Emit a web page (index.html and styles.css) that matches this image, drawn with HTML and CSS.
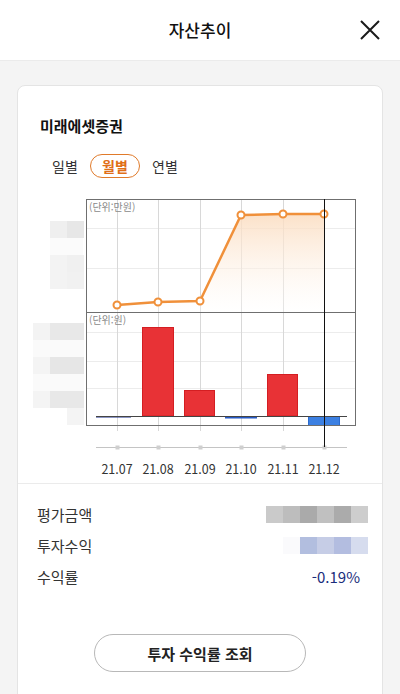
FILE: index.html
```html
<!DOCTYPE html>
<html lang="ko">
<head>
<meta charset="utf-8">
<title>자산추이</title>
<link rel="stylesheet" href="styles.css">
</head>
<body>
<header class="top">
  <h1 class="top-title">자산추이</h1>
  <button class="close" aria-label="닫기">
    <svg width="22" height="22" viewBox="0 0 22 22"><path d="M2 2 L20 20 M20 2 L2 20" stroke="#1a1a1a" stroke-width="2" fill="none"/></svg>
  </button>
</header>
<main class="page">
  <section class="card">
    <h2 class="card-title">미래에셋증권</h2>
    <div class="tabs">
      <span class="tab">일별</span>
      <span class="tab active">월별</span>
      <span class="tab">연별</span>
    </div>
    <div class="chart">
      <svg width="366" height="293" viewBox="17 190 366 293">
        <defs>
          <linearGradient id="area" x1="0" y1="0" x2="0" y2="1">
            <stop offset="0" stop-color="#fbdcbf" stop-opacity="0.85"/>
            <stop offset="1" stop-color="#ffffff" stop-opacity="0.3"/>
          </linearGradient>
        </defs>
        <!-- blurred y-axis labels -->
        <g>
          <rect x="49" y="221" width="17" height="17" fill="#efefef"/>
          <rect x="66" y="221" width="17" height="17" fill="#e7e7e7"/>
          <rect x="49" y="238" width="33" height="17" fill="#fbfbfb"/>
          <rect x="49" y="255" width="17" height="17" fill="#f3f3f3"/>
          <rect x="66" y="255" width="17" height="17" fill="#f0f0f0"/>
          <rect x="49" y="272" width="17" height="17" fill="#f3f3f3"/>
          <rect x="66" y="272" width="17" height="17" fill="#f1f1f1"/>
          <rect x="32" y="323" width="17" height="17" fill="#f3f3f3"/>
          <rect x="49" y="323" width="34" height="17" fill="#e8e8e8"/>
          <rect x="32" y="340" width="51" height="17" fill="#fafafa"/>
          <rect x="32" y="357" width="17" height="17" fill="#f4f4f4"/>
          <rect x="49" y="357" width="34" height="17" fill="#e6e6e6"/>
          <rect x="32" y="374" width="51" height="17" fill="#fafafa"/>
          <rect x="32" y="391" width="17" height="17" fill="#f4f4f4"/>
          <rect x="49" y="391" width="34" height="17" fill="#e8e8e8"/>
          <rect x="66" y="408" width="17" height="17" fill="#f4f4f4"/>
        </g>
        <!-- grid -->
        <g stroke="#ececec" stroke-width="1">
          <line x1="86" y1="228.5" x2="354" y2="228.5"/>
          <line x1="86" y1="268.5" x2="354" y2="268.5"/>
          <line x1="86" y1="332.5" x2="354" y2="332.5"/>
          <line x1="86" y1="361.5" x2="354" y2="361.5"/>
          <line x1="86" y1="388.5" x2="354" y2="388.5"/>
        </g>
        <g stroke="#d8d8d8" stroke-width="1">
          <line x1="116.5" y1="199" x2="116.5" y2="431"/>
          <line x1="157.5" y1="199" x2="157.5" y2="431"/>
          <line x1="199.5" y1="199" x2="199.5" y2="431"/>
          <line x1="240.5" y1="199" x2="240.5" y2="431"/>
          <line x1="282.5" y1="199" x2="282.5" y2="431"/>
        </g>
        <!-- area + line -->
        <polygon points="116,305 157,302 199,301 240,215 282,214 323,214 323,312 116,312" fill="url(#area)"/>
        <polyline points="116,305 157,302 199,301 240,215 282,214 323,214" fill="none" stroke="#f0903a" stroke-width="2.5" stroke-linejoin="round"/>
        <g fill="#fff" stroke="#f0903a" stroke-width="2">
          <circle cx="116" cy="305" r="3.5"/>
          <circle cx="157" cy="302" r="3.5"/>
          <circle cx="199" cy="301" r="3.5"/>
          <circle cx="240" cy="215" r="3.5"/>
          <circle cx="282" cy="214" r="3.5"/>
          <circle cx="323" cy="214" r="3.5"/>
        </g>
        <!-- bars -->
        <g fill="#e83236" stroke="#d41e22" stroke-width="1">
          <rect x="141.5" y="327.5" width="31" height="88.5"/>
          <rect x="183.5" y="390.5" width="30" height="25.5"/>
          <rect x="266.5" y="374.5" width="30" height="41.5"/>
        </g>
        <rect x="95" y="416" width="35" height="1.5" fill="#1b2f8a"/>
        <rect x="224" y="416" width="32" height="2.5" fill="#2559c4"/>
        <rect x="307.5" y="416.5" width="31" height="9" fill="#3c80e2" stroke="#2a6bd0" stroke-width="1"/>
        <line x1="95" y1="416.5" x2="346" y2="416.5" stroke="#444" stroke-width="1"/>
        <!-- frames -->
        <rect x="85.5" y="199.5" width="269" height="113" fill="none" stroke="#6f6f6f" stroke-width="1"/>
        <rect x="85.5" y="312.5" width="269" height="113" fill="none" stroke="#6f6f6f" stroke-width="1"/>
        <text x="88" y="211" class="unit">(단위:만원)</text>
        <text x="88" y="324" class="unit">(단위:원)</text>
        <!-- x axis -->
        <line x1="95" y1="447.5" x2="346" y2="447.5" stroke="#c4c4c4" stroke-width="1"/>
        <g fill="#cfcfcf">
          <rect x="114.5" y="445.5" width="4" height="4"/>
          <rect x="155.5" y="445.5" width="4" height="4"/>
          <rect x="197.5" y="445.5" width="4" height="4"/>
          <rect x="238.5" y="445.5" width="4" height="4"/>
          <rect x="280.5" y="445.5" width="4" height="4"/>
          <rect x="321.5" y="445.5" width="4" height="4"/>
        </g>
        <line x1="323.5" y1="199" x2="323.5" y2="447" stroke="#111" stroke-width="1"/>
        <g class="xlabel">
          <text x="116" y="474">21.07</text>
          <text x="157" y="474">21.08</text>
          <text x="199" y="474">21.09</text>
          <text x="240" y="474">21.10</text>
          <text x="282" y="474">21.11</text>
          <text x="323" y="474">21.12</text>
        </g>
      </svg>
    </div>
    <dl class="info">
      <div class="row">
        <dt>평가금액</dt>
        <dd class="mosaic">
          <i style="background:#cacaca"></i><i style="background:#bdbdbd"></i><i style="background:#aaaaaa"></i><i style="background:#c0c0c0"></i><i style="background:#ababab"></i><i style="background:#cdcdcd"></i>
        </dd>
      </div>
      <div class="row">
        <dt>투자수익</dt>
        <dd class="mosaic">
          <i style="background:#fafafc"></i><i style="background:#b2bedf"></i><i style="background:#c6cde6"></i><i style="background:#b3bde0"></i><i style="background:#d6dcee"></i>
        </dd>
      </div>
      <div class="row">
        <dt>수익률</dt>
        <dd class="rate">-0.19%</dd>
      </div>
    </dl>
    <div class="actions">
      <button class="btn">투자 수익률 조회</button>
    </div>
  </section>
</main>
</body>
</html>
```
FILE: styles.css
```css
* { box-sizing: border-box; }
html, body {
  margin: 0;
  padding: 0;
  height: 100%;
}
body {
  font-family: "Noto Sans CJK KR", "Noto Sans", "Liberation Sans", sans-serif;
  background: #f4f4f4;
  color: #222;
  overflow: hidden;
}
.top {
  position: relative;
  height: 61px;
  background: #fff;
  border-bottom: 1px solid #ebebeb;
  display: flex;
  align-items: center;
  justify-content: center;
}
.top-title {
  margin: 0;
  font-size: 17px;
  font-weight: 500;
  color: #111;
  line-height: 22px;
}
.close {
  position: absolute;
  right: 19px;
  top: 19px;
  width: 22px;
  height: 22px;
  padding: 0;
  border: 0;
  background: none;
  display: flex;
}
.page {
  padding: 24px 17px 0;
}
.card {
  background: #fff;
  border: 1px solid #e4e4e4;
  border-radius: 8px;
  min-height: 640px;
}
.card-title {
  margin: 30px 0 0 22px;
  font-size: 15px;
  font-weight: 700;
  line-height: 20px;
  color: #111;
}
.tabs {
  display: flex;
  margin: 18px 0 0 22px;
}
.tab {
  width: 50px;
  height: 24px;
  border-radius: 12px;
  display: flex;
  align-items: center;
  justify-content: center;
  font-size: 14px;
  color: #333;
  border: 1px solid transparent;
}
.tab.active {
  border-color: #e07a2a;
  color: #e06f18;
  font-weight: 700;
}
.chart {
  margin-top: 12px;
  height: 293px;
}
.chart svg { display: block; }
.unit {
  font-size: 10px;
  fill: #8a8a8a;
  font-family: "Noto Sans CJK KR", sans-serif;
}
.xlabel text {
  font-size: 12.5px;
  fill: #333;
  text-anchor: middle;
  font-family: "Noto Sans CJK KR", "Noto Sans", sans-serif;
}
.info {
  margin: 0;
  border-top: 1px solid #ebebeb;
  padding: 15px 22px 0 19px;
}
.row {
  display: flex;
  align-items: center;
  justify-content: space-between;
  height: 31px;
}
.row dt {
  font-size: 15px;
  color: #333;
}
.row dd { margin: 0; }
.mosaic {
  display: flex;
  margin-right: -8px !important;
}
.mosaic i {
  display: block;
  width: 17px;
  height: 17px;
}
.rate {
  font-size: 15px;
  color: #1a2d7c;
}
.actions {
  display: flex;
  justify-content: center;
  margin-top: 42px;
}
.btn {
  width: 212px;
  height: 38px;
  border: 1px solid #b8b8b8;
  border-radius: 19px;
  background: #fff;
  font-family: inherit;
  font-size: 15px;
  font-weight: 700;
  color: #222;
}
```
